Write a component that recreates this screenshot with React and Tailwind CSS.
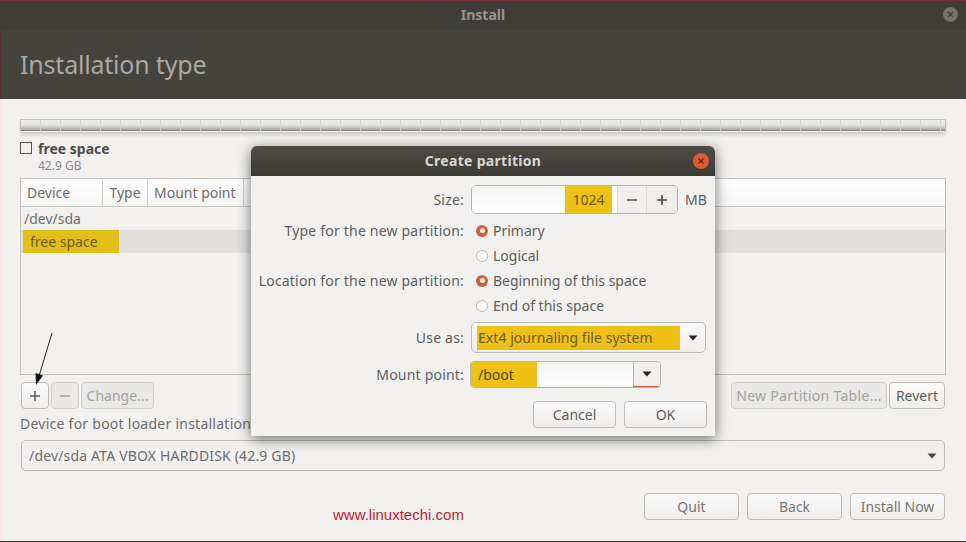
import React from 'react';

const font = 'font-["Noto_Sans",sans-serif]';

function Btn({ children, disabled, className = '' }) {
  return (
    <div className={`flex items-center justify-center rounded-[4px] border text-[14px] leading-none ${
      disabled ? 'border-[#d0cecb] bg-[#e9e8e6] text-[#a3a3a1]' : 'border-[#bdbbb7] bg-gradient-to-b from-[#fbfafa] to-[#efeeec] text-[#5e5e5c]'
    } ${className}`}>
      {children}
    </div>
  );
}

function Caret({ className = '' }) {
  return (
    <svg width="10" height="6" viewBox="0 0 10 6" className={className}>
      <path d="M0.5 0.5h9L5 5.5z" fill="currentColor" />
    </svg>
  );
}

function Radio({ on, label }) {
  return (
    <div className="flex h-[25px] items-center gap-[5px] pl-[5px]">
      {on ? (
        <span className="flex h-[12px] w-[12px] items-center justify-center rounded-full bg-[#d2603a]">
          <span className="h-[5px] w-[5px] rounded-full bg-[#f6eee9]" />
        </span>
      ) : (
        <span className="h-[12px] w-[12px] rounded-full border border-[#b9b7b3] bg-white" />
      )}
      <span className="text-[14px] text-[#5e5e5c]">{label}</span>
    </div>
  );
}

function Row({ label, children, className = '' }) {
  return (
    <div className={`flex items-center ${className}`}>
      <div className="w-[213px] shrink-0 text-right text-[14px] tracking-[0.2px] text-[#5e5e5c]">{label}</div>
      <div className="ml-[7px] min-w-0 flex-1">{children}</div>
    </div>
  );
}

function CreatePartition() {
  return (
    <div className="absolute left-[251px] top-[146px] h-[290px] w-[464px] overflow-hidden rounded-t-[6px] bg-[#f2f1f0] shadow-[0_3px_14px_rgba(0,0,0,0.55)]">
      <div className="relative flex h-[30px] items-center justify-center bg-gradient-to-b from-[#4f4c45] to-[#3c3a35] pb-[2px] text-[14px] font-bold tracking-[0.3px] text-[#d8d6d1]">
        Create partition
        <span className="absolute right-[6px] top-[7px] flex h-[16px] w-[16px] items-center justify-center rounded-full bg-[#dc5a30]">
          <svg width="8" height="8" viewBox="0 0 8 8"><path d="M1.5 1.5l5 5M6.5 1.5l-5 5" stroke="#5b2a18" strokeWidth="1.2" /></svg>
        </span>
      </div>
      <div className="flex flex-col pt-[9px]">
        <Row label="Size:" className="h-[29px]">
          <div className="flex items-center">
            <div className="flex h-[29px] w-[207px] overflow-hidden rounded-[5px] border border-[#b5b3af] bg-white">
              <div className="w-[93px] bg-gradient-to-b from-[#f4f4f3] to-white" />
              <div className="flex w-[47px] items-center justify-center bg-[#efc114] text-[14px] text-[#6b5b14]">1024</div>
              <div className="w-[5px] bg-white" />
              <div className="flex w-[29px] items-center justify-center border-l border-[#dddbd8] bg-[#f0efed] text-[#4a4a48]">
                <svg width="12" height="12" viewBox="0 0 12 12"><path d="M1 6h10" stroke="currentColor" strokeWidth="1.6" /></svg>
              </div>
              <div className="flex flex-1 items-center justify-center border-l border-[#dddbd8] bg-[#f0efed] text-[#4a4a48]">
                <svg width="12" height="12" viewBox="0 0 12 12"><path d="M1 6h10M6 1v10" stroke="currentColor" strokeWidth="1.6" /></svg>
              </div>
            </div>
            <span className="ml-[7px] text-[14px] text-[#5e5e5c]">MB</span>
          </div>
        </Row>
        <div className="mt-[4px]">
          <Row label="Type for the new partition:"><Radio on label="Primary" /></Row>
          <Row label=""><Radio label="Logical" /></Row>
          <Row label="Location for the new partition:"><Radio on label="Beginning of this space" /></Row>
          <Row label=""><Radio label="End of this space" /></Row>
        </div>
        <Row label="Use as:" className="mt-[4px] h-[31px]">
          <div className="flex h-[31px] w-[235px] items-center rounded-[5px] border border-[#bdbbb7] bg-gradient-to-b from-[#fbfafa] to-[#efeeec] pl-[5px]">
            <div className="flex h-[24px] w-[203px] items-center bg-[#efc114] pl-[1px] text-[14px] tracking-[0.05px] text-[#6b5b14]">Ext4 journaling file system</div>
            <Caret className="ml-[8px] text-[#222]" />
          </div>
        </Row>
        <Row label="Mount point:" className="mt-[8px] h-[27px]">
          <div className="-ml-[1px] flex h-[27px] w-[191px] overflow-hidden rounded-[4px] border border-[#b5b3af] bg-white">
            <div className="flex w-[66px] items-center bg-[#efc114] pl-[7px] text-[14px] text-[#4d4510]">/boot</div>
            <div className="flex-1 bg-gradient-to-b from-[#f4f4f3] to-white" />
            <div className="flex w-[27px] items-center justify-center border-b border-l border-[#b5b3af] border-b-[#d2603a] bg-[#f0efed]">
              <Caret className="text-[#222]" />
            </div>
          </div>
        </Row>
        <div className="mt-[13px] flex justify-end gap-[8px] pr-[8px]">
          <Btn className="h-[27px] w-[83px]">Cancel</Btn>
          <Btn className="h-[27px] w-[83px]">OK</Btn>
        </div>
      </div>
    </div>
  );
}

export default function App() {
  return (
    <div className={`relative flex h-[542px] w-[966px] flex-col overflow-hidden border-b border-b-[#3a3935] bg-[#f2f1f0] ${font}`}>
      <div className="relative flex h-[30px] items-center justify-center border-t border-[#7c2a35] bg-[#3f3d38] pb-[2px] text-[14px] font-bold text-[#96948e]">
        Install
        <span className="absolute right-[8px] top-[6px] flex h-[15px] w-[15px] items-center justify-center rounded-full bg-[#74726d]">
          <svg width="7" height="7" viewBox="0 0 7 7"><path d="M1 1l5 5M6 1l-5 5" stroke="#3f3d38" strokeWidth="1.1" /></svg>
        </span>
      </div>
      <div className="flex h-[69px] items-center border-l border-[#5c2a32] bg-[#45433d] pl-[19px] text-[25px] tracking-[-0.2px] text-[#a9a8a2]">Installation type</div>

      <div className="flex flex-1 flex-col border-x-[2px] border-l-[#fde6ee] border-r-[#fde9df] px-[18px]">
        <div className="mt-[20px] h-[13px] border-x border-t border-b border-[#c4c2be] border-b-[#77767300] bg-[repeating-linear-gradient(90deg,transparent_0,transparent_19px,#d3d2cf_19px,#d3d2cf_20px),linear-gradient(180deg,#efefed_0%,#e4e3e1_45%,#bdbcb9_78%,#7b7a77_100%)] shadow-[0_3px_3px_rgba(0,0,0,0.14)]" />
        <div className="mt-[9px] flex h-[14px] items-center gap-[6px]">
          <span className="h-[12px] w-[12px] border border-[#55534f] bg-[#f2f1f0]" />
          <span className="text-[14px] font-bold text-[#4e4e4c]">free space</span>
        </div>
        <div className="mt-[2px] h-[18px] pl-[18px] text-[12px] text-[#8a8a88]">42.9 GB</div>

        <div className="mt-[3px] flex h-[197px] flex-col border border-[#c3c1bd] bg-[#f2f1f0]">
          <div className="flex h-[28px] shrink-0 border-b border-[#c9c7c3] bg-gradient-to-b from-white to-[#f6f6f5] text-[14px] text-[#6d6d6b]">
            <div className="flex w-[82px] items-center border-r border-[#d2d0cc] pl-[6px]">Device</div>
            <div className="flex w-[45px] items-center justify-center border-r border-[#d2d0cc]">Type</div>
            <div className="flex w-[96px] items-center border-r border-[#d2d0cc] pl-[6px]">Mount point</div>
          </div>
          <div className="flex h-[23px] items-center pl-[3px] text-[14px] text-[#6d6d6b]">/dev/sda</div>
          <div className="h-[23px] bg-[#e0dfde] pl-[2px]">
            <div className="flex h-[23px] w-[96px] items-center bg-[#e2bf17] pl-[7px] text-[14px] text-[#6b5b14]">free space</div>
          </div>
        </div>

        <div className="mt-[7px] flex h-[27px] pl-[1px]">
          <Btn className="w-[28px] text-[#4a4a48]">
            <svg width="12" height="12" viewBox="0 0 12 12"><path d="M1 6h10M6 1v10" stroke="currentColor" strokeWidth="1.6" /></svg>
          </Btn>
          <Btn disabled className="ml-[2px] w-[28px]">
            <svg width="12" height="12" viewBox="0 0 12 12"><path d="M1 6h10" stroke="currentColor" strokeWidth="1.6" /></svg>
          </Btn>
          <Btn disabled className="ml-[2px] w-[73px]">Change...</Btn>
          <Btn disabled className="ml-auto w-[156px] tracking-[0.3px]">New Partition Table...</Btn>
          <Btn className="ml-[2px] mr-[1px] w-[56px]">Revert</Btn>
        </div>

        <div className="mt-[4px] h-[19px] text-[14px] tracking-[0.25px] text-[#6d6d6b]">Device for boot loader installation:</div>
        <div className="mx-[1px] mt-[8px] flex h-[31px] items-center justify-between rounded-[5px] border border-[#bdbbb7] bg-[#f2f1f0] pl-[7px] pr-[7px] text-[14px] tracking-[0.17px] text-[#6d6d6b]">
          /dev/sda ATA VBOX HARDDISK (42.9 GB)
          <Caret className="text-[#444]" />
        </div>

        <div className="mt-[22px] flex justify-end gap-[8px] pr-[1px]">
          <Btn className="h-[27px] w-[95px] !text-[#777]">Quit</Btn>
          <Btn className="h-[27px] w-[95px] !text-[#777]">Back</Btn>
          <Btn className="h-[27px] w-[95px] !text-[#777]">Install Now</Btn>
        </div>
      </div>

      <CreatePartition />

      <span className='absolute left-[333px] top-[507px] font-["Liberation_Sans",sans-serif] text-[15px] leading-none text-[#c8202f]'>www.linuxtechi.com</span>

      <svg className="absolute left-[30px] top-[330px]" width="26" height="60" viewBox="0 0 26 60">
        <path d="M22 3L9 46" stroke="#222" strokeWidth="1" />
        <path d="M6 55L5.5 43L13 45.5z" fill="#111" />
      </svg>
    </div>
  );
}
